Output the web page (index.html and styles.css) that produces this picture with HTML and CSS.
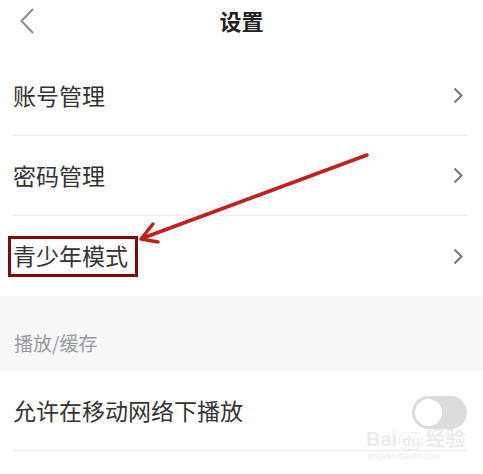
FILE: index.html
```html
<!DOCTYPE html>
<html lang="zh-CN">
<head>
  <meta charset="UTF-8" />
  <meta name="viewport" content="width=device-width, initial-scale=1.0" />
  <title>设置</title>
  <link rel="stylesheet" href="styles.css">
</head>
<body>
  <div class="page">
    <div class="topbar">
      <svg class="back" width="14" height="26" viewBox="0 0 14 26">
        <polyline points="13,1 1.5,13 13,25" fill="none" stroke="#8a8a8a" stroke-width="2" />
      </svg>
      <h1>设置</h1>
    </div>

    <div class="group">
      <div class="row">
        <span class="label">账号管理</span>
        <svg class="arrow" width="10" height="17" viewBox="0 0 10 17">
          <polyline points="1.5,1.5 8.5,8.5 1.5,15.5" fill="none" stroke="#777" stroke-width="2" />
        </svg>
      </div>
      <div class="row">
        <span class="label">密码管理</span>
        <svg class="arrow" width="10" height="17" viewBox="0 0 10 17">
          <polyline points="1.5,1.5 8.5,8.5 1.5,15.5" fill="none" stroke="#777" stroke-width="2" />
        </svg>
      </div>
      <div class="row last">
        <span class="label">青少年模式</span>
        <svg class="arrow" width="10" height="17" viewBox="0 0 10 17">
          <polyline points="1.5,1.5 8.5,8.5 1.5,15.5" fill="none" stroke="#777" stroke-width="2" />
        </svg>
      </div>
    </div>

    <div class="section-title">播放/缓存</div>

    <div class="group">
      <div class="row">
        <span class="label">允许在移动网络下播放</span>
        <div class="switch"><div class="knob"></div></div>
      </div>
    </div>

    <svg class="marks" width="483" height="474" viewBox="0 0 483 474">
      <rect x="9.5" y="237.5" width="127" height="38" fill="none" stroke="#7d0a0a" stroke-width="3" />
      <line x1="367" y1="155" x2="143" y2="238" stroke="#c0211b" stroke-width="3.5" stroke-linecap="round" />
      <polyline points="153,224 141,239 158,242" fill="none" stroke="#c0211b" stroke-width="3.5" stroke-linecap="round" stroke-linejoin="round" />
    </svg>

    <div class="watermark">
      <div class="wm-logo">Bai<span class="wm-du">du</span>经验</div>
      <div class="wm-url">jingyan.baidu.com</div>
    </div>
  </div>
</body>
</html>
```

FILE: styles.css
```css
body {
  margin: 0;
  background: #fff;
  font-family: "Noto Sans CJK SC", "Noto Sans", sans-serif;
}
.page {
  position: relative;
  width: 483px;
  height: 474px;
  overflow: hidden;
}
.topbar {
  position: relative;
  height: 56px;
  display: flex;
  align-items: flex-start;
  justify-content: center;
}
.back {
  position: absolute;
  left: 20px;
  top: 8px;
}
h1 {
  margin: 0;
  padding-top: 4px;
  font-size: 22px;
  line-height: 32px;
  font-weight: bold;
  color: #222;
}
.group {
  padding: 0 16px 0 13px;
  background: #fff;
}
.row {
  box-sizing: border-box;
  height: 80px;
  display: flex;
  align-items: center;
  justify-content: space-between;
  border-bottom: 1px solid #ececec;
}
.row.last {
  border-bottom: none;
}
.label {
  font-size: 23px;
  color: #333;
  line-height: 30px;
  padding-bottom: 2px;
}
.arrow {
  margin-right: 4px;
}
.section-title {
  box-sizing: border-box;
  height: 75px;
  background: #f6f7f9;
  padding: 32px 14px 0;
  font-size: 19px;
  line-height: 30px;
  color: #999;
}
.switch {
  width: 55px;
  height: 33px;
  border-radius: 17px;
  background: #dcdcdc;
  margin-top: 4px;
  display: flex;
  align-items: center;
  padding: 0 3px;
  box-sizing: border-box;
}
.knob {
  width: 27px;
  height: 27px;
  border-radius: 50%;
  background: #fff;
}
.marks {
  position: absolute;
  left: 0;
  top: 0;
}
.watermark {
  position: absolute;
  left: 366px;
  top: 428px;
  color: #ececec;
  font-family: "Liberation Sans", "Noto Sans CJK SC", sans-serif;
}
.wm-logo {
  font-size: 20px;
  line-height: 22px;
  font-weight: bold;
}
.wm-du {
  display: inline-block;
  border: 1px solid #ececec;
  border-radius: 8px;
  font-size: 15px;
  line-height: 16px;
  padding: 0 2px;
  margin: 0 2px;
}
.wm-url {
  font-size: 9px;
  line-height: 12px;
  padding-left: 2px;
}
```
